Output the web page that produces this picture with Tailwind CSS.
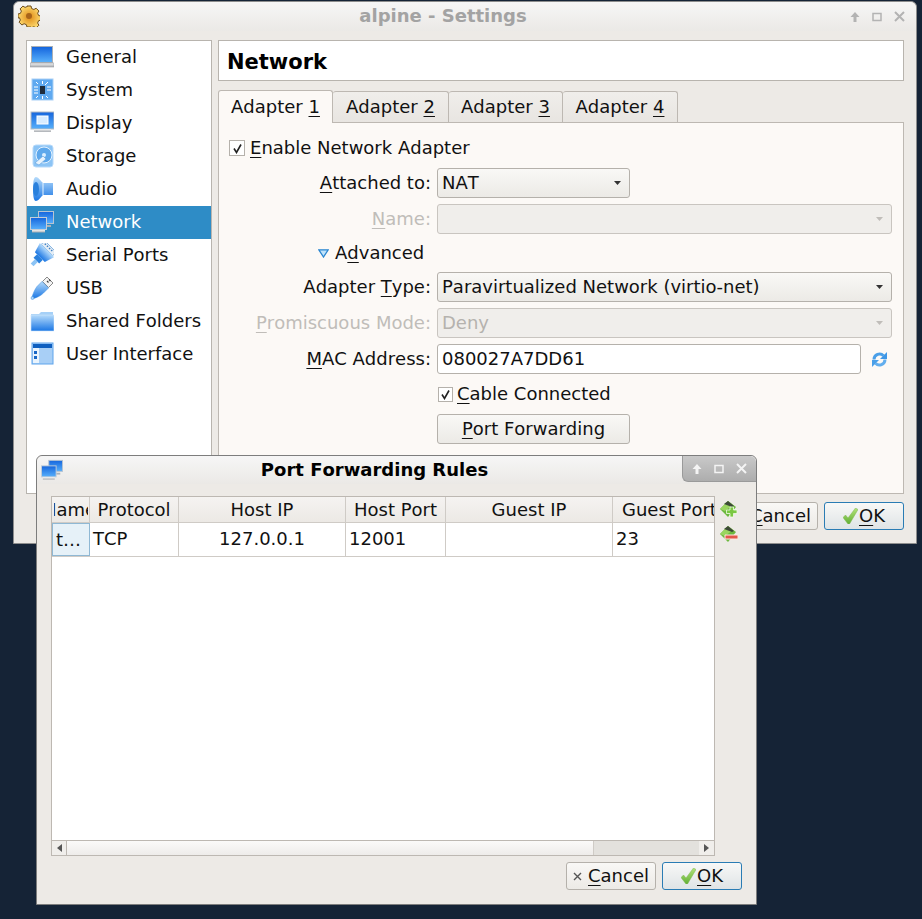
<!DOCTYPE html>
<html lang="en">
<head>
  <meta charset="UTF-8"/>
  <title>alpine - Settings</title>
  <script src="https://cdn.jsdelivr.net/npm/@tailwindcss/browser@4"></script>
</head>
<body class="relative h-[919px] w-[922px] overflow-hidden bg-[#152336] font-['DejaVu_Sans',sans-serif] text-[18px] leading-none text-[#111] [font-kerning:none]">

  <!-- shared gradients -->
  <svg class="absolute h-0 w-0">
    <defs>
      <linearGradient id="blue" x1="0" y1="0" x2="0" y2="1"><stop offset="0" stop-color="#b5dbfb"/><stop offset="1" stop-color="#1a76e4"/></linearGradient>
      <linearGradient id="screen" x1="0" y1="0" x2="0" y2="1"><stop offset="0" stop-color="#1565dd"/><stop offset="1" stop-color="#58b0fb"/></linearGradient>
      <linearGradient id="grey" x1="0" y1="0" x2="0" y2="1"><stop offset="0" stop-color="#f2f2f2"/><stop offset="1" stop-color="#a9adb2"/></linearGradient>
      <linearGradient id="green" x1="0" y1="0" x2="0" y2="1"><stop offset="0" stop-color="#b3e37a"/><stop offset="1" stop-color="#62b035"/></linearGradient>
      <radialGradient id="gear"><stop offset="0" stop-color="#e08a14"/><stop offset="1" stop-color="#fbd66c"/></radialGradient>
      <symbol id="net" viewBox="0 0 24 22">
        <rect x="8.500" y="0.500" width="15" height="12" fill="url(#screen)" stroke="#b7c4d2"/>
        <path d="M11 14h10v2H11z" fill="#aab2ba"/>
        <rect x="0.500" y="6.500" width="16" height="12" fill="url(#screen)" stroke="#c4ced8"/>
        <path d="M2 19h13v2.500H2z" fill="url(#grey)"/>
      </symbol>
      <symbol id="check" viewBox="0 0 15 16">
        <path d="M0 9.500l2.500-2.500 2.500 3L12.500 0 15 1.500 6.500 16H5z" fill="url(#green)" stroke="#7eb650" stroke-width=".5"/>
      </symbol>
    </defs>
  </svg>

  <!-- main settings window -->
  <div class="absolute left-[13px] top-[1px] flex h-[543px] w-[904px] flex-col rounded-t-[6px] border border-[#8d8d8d] bg-[#edeae6]">
    <div class="relative flex h-[29px] shrink-0 items-center justify-center rounded-t-[6px] bg-gradient-to-b from-[#f6f6f6] to-[#ebe9e6] pb-[2px] pr-[44px]">
      <svg class="absolute left-[4px] top-[3px] h-[22px] w-[22px]" viewBox="0 0 22 22">
        <path d="M9 1h4l.6 2.500 2.300 1 2.200-1.300 2.800 2.800-1.300 2.200 1 2.300 2.400.6v4l-2.400.6-1 2.300 1.300 2.200-2.800 2.800-2.200-1.300-2.300 1L13 22H9l-.6-2.300-2.300-1-2.200 1.300-2.800-2.800 1.300-2.200-1-2.300L0 13V9l2.400-.6 1-2.300L2.100 3.900 4.900 1.100l2.200 1.300 2.300-1z" fill="url(#gear)" stroke="#6d4c1a" stroke-width="1"/>
        <circle cx="11" cy="11" r="3" fill="#a8641a"/>
      </svg>
      <span class="text-[18px] font-bold text-[#a3a3a3]">alpine - Settings</span>
      <div class="absolute right-[11px] top-[9px] flex items-center gap-[12px]">
        <svg class="h-[10px] w-[10px]" viewBox="0 0 10 10"><path d="M5 0l4.500 5H6.500v5h-3V5H.5z" fill="#b3b3b3"/></svg>
        <svg class="h-[10px] w-[10px]" viewBox="0 0 10 10"><path d="M1 1.500h8v7H1z" fill="none" stroke="#b3b3b3" stroke-width="1.500"/></svg>
        <svg class="h-[11px] w-[11px]" viewBox="0 0 11 11"><path d="M1 1l9 9M10 1l-9 9" stroke="#b3b3b3" stroke-width="2"/></svg>
      </div>
    </div>

    <div class="flex flex-1 gap-[6px] px-[12px] pt-[9px]">
      <!-- sidebar -->
      <ul class="h-[454px] w-[186px] shrink-0 border border-[#b8b4ae] bg-white">
        <li class="flex h-[33px] items-center pb-[2px]">
          <svg class="ml-[3px] mr-[12px] h-[24px] w-[24px]" viewBox="0 0 24 24"><rect x="1" y="1" width="22" height="17" fill="#aab0b6"/><rect x="2" y="2" width="20" height="15" fill="url(#screen)"/><path d="M0 18h24v4H0z" fill="url(#grey)" stroke="#9aa0a6" stroke-width=".6"/></svg>
          General
        </li>
        <li class="flex h-[33px] items-center pb-[2px]">
          <svg class="ml-[3px] mr-[12px] h-[24px] w-[24px]" viewBox="0 0 24 24"><rect x="2" y="1" width="21" height="21" fill="#5fa9f0" stroke="#a9d0f5"/><rect x="10" y="8" width="5" height="8" fill="#1f2c3c"/><path d="M12.500 3v3M12.500 18v3M4 9h4M4 12h4M4 15h4M17 9h4M17 12h4M15 7l3-3M8 18l-2 2M16 18l2 2M8 6L6 4" stroke="#fff"/></svg>
          System
        </li>
        <li class="flex h-[33px] items-center pb-[2px]">
          <svg class="ml-[3px] mr-[12px] h-[24px] w-[24px]" viewBox="0 0 24 24"><rect x="1" y="1" width="23" height="17" fill="url(#screen)" stroke="#b5bcc4"/><rect x="7" y="5" width="11" height="8" fill="#d8ecff" stroke="#fff"/><path d="M4 18h17v3H4z" fill="url(#grey)"/></svg>
          Display
        </li>
        <li class="flex h-[33px] items-center pb-[2px]">
          <svg class="ml-[3px] mr-[12px] h-[24px] w-[24px]" viewBox="0 0 24 24"><rect x="3" y="1" width="20" height="22" rx="3" fill="#8cc4f5" stroke="#b8dafa"/><circle cx="14" cy="11" r="8" fill="#5ea8ec" stroke="#e4f2ff"/><circle cx="14" cy="11" r="2" fill="#dcefff"/><path d="M5 19l8-7 3 3-7 6z" fill="#e8f3fd" stroke="#5fa0dc" stroke-width=".6"/></svg>
          Storage
        </li>
        <li class="flex h-[33px] items-center pb-[2px]">
          <svg class="ml-[3px] mr-[12px] h-[24px] w-[24px]" viewBox="0 0 24 24"><path d="M6 0c2 0 4 3 7 6h10v12H13c-3 3-5 6-7 6-2.500 0-3-6-3-12S3.500 0 6 0z" fill="url(#blue)"/><ellipse cx="6" cy="12" rx="3" ry="7" fill="#2a80dc"/><path d="M13 6v12" stroke="#e6f3fe"/></svg>
          Audio
        </li>
        <li class="flex h-[33px] items-center bg-[#2e8cc6] pb-[2px] text-white">
          <svg class="ml-[3px] mr-[12px] h-[24px] w-[24px]"><use href="#net"/></svg>
          Network
        </li>
        <li class="flex h-[33px] items-center pb-[2px]">
          <svg class="ml-[3px] mr-[12px] h-[24px] w-[24px]" viewBox="0 0 24 24"><g transform="rotate(45 12 12)"><rect x="4" y="0" width="16" height="5" fill="#e4edf5" stroke="#6fa8de" stroke-width=".8"/><path d="M6 2h12" stroke="#3f7fc4" stroke-width="1.400" stroke-dasharray="1.500 1.500"/><path d="M2 5h20l-3 10H5z" fill="url(#blue)"/><path d="M8 15h8v5H8z" fill="#2a80dc"/><path d="M10 20h4v6h-4z" fill="#8cc4f5"/></g></svg>
          Serial Ports
        </li>
        <li class="flex h-[33px] items-center pb-[2px]">
          <svg class="ml-[3px] mr-[12px] h-[24px] w-[24px]" viewBox="0 0 24 24"><path d="M17 1l6 6-4.500 4.500-6-6z" fill="#f4f4f4" stroke="#8a8a8a"/><path d="M17 5l1.500 1.500M19 3.500L20.500 5" stroke="#444" stroke-width="1.200"/><path d="M12 5.500l6.500 6.500-5 5c-3 3-6.500 4.500-10 5.500L2 21c1-3.500 3-8 5-10.500z" fill="url(#blue)" stroke="#3d8fe0" stroke-width=".5"/><circle cx="2.500" cy="22" r="1.500" fill="#a9d4fa" stroke="#3d8fe0" stroke-width=".5"/></svg>
          USB
        </li>
        <li class="flex h-[33px] items-center pb-[2px]">
          <svg class="ml-[3px] mr-[12px] h-[24px] w-[24px]" viewBox="0 0 24 24"><path d="M1 5h8l2-2h12v3H1z" fill="#a5d0f7"/><path d="M1 6h23v16H1z" fill="url(#blue)" stroke="#cde4fa" stroke-width=".6"/></svg>
          Shared Folders
        </li>
        <li class="flex h-[33px] items-center pb-[2px]">
          <svg class="ml-[3px] mr-[12px] h-[24px] w-[24px]" viewBox="0 0 24 24"><rect x="2" y="1" width="21" height="21" fill="#a8cff6" stroke="#5ea4ec"/><path d="M3 2h19v4H3z" fill="#0e5fc0"/><path d="M3 6h6v15H3z" fill="#eaf4fd"/><path d="M4 9h3v3H4zM4 14h3v3H4z" fill="#1766c6"/></svg>
          User Interface
        </li>
      </ul>

      <!-- settings page -->
      <div class="flex h-[454px] flex-1 flex-col">
        <div class="flex h-[41px] shrink-0 items-center border border-[#b8b4ae] bg-white pl-[8px] pt-[3px] text-[21px] font-bold text-black">Network</div>
        <div class="mt-[8px] flex h-[33px] shrink-0 items-end">
          <div class="z-10 -mb-px flex h-[33px] w-[115px] items-center justify-center rounded-t-[3px] border border-b-0 border-[#bdb8b2] bg-[#fcf9f6]">Adapter&nbsp;<span class="underline underline-offset-[3px]">1</span></div>
          <div class="flex h-[31px] w-[116px] items-center justify-center rounded-t-[3px] border border-b-0 border-l-0 border-[#bdb8b2] bg-gradient-to-b from-[#f0eeeb] to-[#e8e5e1]">Adapter&nbsp;<span class="underline underline-offset-[3px]">2</span></div>
          <div class="flex h-[31px] w-[114px] items-center justify-center rounded-t-[3px] border border-b-0 border-l-0 border-[#bdb8b2] bg-gradient-to-b from-[#f0eeeb] to-[#e8e5e1]">Adapter&nbsp;<span class="underline underline-offset-[3px]">3</span></div>
          <div class="flex h-[31px] w-[115px] items-center justify-center rounded-t-[3px] border border-b-0 border-l-0 border-[#bdb8b2] bg-gradient-to-b from-[#f0eeeb] to-[#e8e5e1]">Adapter&nbsp;<span class="underline underline-offset-[3px]">4</span></div>
        </div>
        <div class="flex-1 border border-[#bdb8b2] bg-[#fcf9f6] pt-[15px]">
          <label class="flex h-[20px] items-center pl-[10px]">
            <span class="mr-[5px] flex h-[16px] w-[16px] items-center justify-center border border-[#b5b1ab] bg-white">
              <svg class="h-[11px] w-[11px]" viewBox="0 0 11 11"><path d="M2 5.500l2.500 4L9 1.500" fill="none" stroke="#222" stroke-width="1.600"/></svg>
            </span>
            <span><span class="underline underline-offset-[3px]">E</span>nable Network Adapter</span>
          </label>

          <div class="mt-[10px] grid grid-cols-[212px_1fr] items-center gap-x-[6px] pr-[11px]">
            <div class="h-[30px] text-right leading-[30px]"><span class="underline underline-offset-[3px]">A</span>ttached to:</div>
            <div class="flex h-[30px] w-[193px] items-center justify-between rounded-[3px] border border-[#b5b1ab] bg-gradient-to-b from-[#f9f8f6] to-[#eceae6] pl-[4px] pr-[8px]">NAT<svg class="h-[4px] w-[7px]" viewBox="0 0 7 4"><path d="M0 0h7L3.500 4z" fill="#333"/></svg></div>

            <div class="mt-[6px] h-[30px] text-right leading-[30px] text-[#c0bdb9]"><span class="underline underline-offset-[3px]">N</span>ame:</div>
            <div class="mt-[6px] flex h-[30px] items-center justify-end rounded-[3px] border border-[#c9c5c0] bg-[#f0eeeb] pr-[8px]"><svg class="h-[4px] w-[7px]" viewBox="0 0 7 4"><path d="M0 0h7L3.500 4z" fill="#c0bdb9"/></svg></div>

            <div class="col-span-2 mt-[4px] flex h-[30px] items-center pl-[99px]">
              <svg class="mr-[6px] h-[9px] w-[11px]" viewBox="0 0 11 9"><path d="M.8.8h9.400L5.500 8z" fill="#bfe3fb" stroke="#2a86d0" stroke-width="1.300"/></svg>
              <span>A<span class="underline underline-offset-[3px]">d</span>vanced</span>
            </div>

            <div class="mt-[4px] h-[30px] text-right leading-[30px]">Adapter <span class="underline underline-offset-[3px]">T</span>ype:</div>
            <div class="mt-[4px] flex h-[30px] items-center justify-between rounded-[3px] border border-[#b5b1ab] bg-gradient-to-b from-[#f9f8f6] to-[#eceae6] pl-[4px] pr-[8px]">Paravirtualized Network (virtio-net)<svg class="h-[4px] w-[7px]" viewBox="0 0 7 4"><path d="M0 0h7L3.500 4z" fill="#333"/></svg></div>

            <div class="mt-[6px] h-[30px] text-right leading-[30px] text-[#c0bdb9]"><span class="underline underline-offset-[3px]">P</span>romiscuous Mode:</div>
            <div class="mt-[6px] flex h-[30px] items-center justify-between rounded-[3px] border border-[#c9c5c0] bg-[#f0eeeb] pl-[4px] pr-[8px] text-[#b5b2ae]">Deny<svg class="h-[4px] w-[7px]" viewBox="0 0 7 4"><path d="M0 0h7L3.500 4z" fill="#c0bdb9"/></svg></div>

            <div class="mt-[6px] h-[30px] text-right leading-[30px]"><span class="underline underline-offset-[3px]">M</span>AC Address:</div>
            <div class="mt-[6px] flex h-[30px] items-center">
              <div class="flex h-[30px] w-[424px] items-center rounded-[3px] border border-[#b5b1ab] bg-white pl-[4px]">080027A7DD61</div>
              <svg class="ml-[10px] h-[17px] w-[17px]" viewBox="0 0 17 17"><path d="M3 8.500a5.500 5.500 0 0 1 9.500-3.700" fill="none" stroke="#4a9fe8" stroke-width="3"/><path d="M16 1v7H9z" fill="#3f97e6"/><path d="M14 8.500a5.500 5.500 0 0 1-9.500 3.700" fill="none" stroke="#62aeee" stroke-width="3"/><path d="M1 16V9h7z" fill="#4a9fe8"/></svg>
            </div>

            <div></div>
            <label class="mt-[10px] flex h-[20px] items-center">
              <span class="ml-[1px] mr-[4px] flex h-[15px] w-[15px] items-center justify-center border border-[#b5b1ab] bg-white">
                <svg class="h-[11px] w-[11px]" viewBox="0 0 11 11"><path d="M2 5.500l2.500 4L9 1.500" fill="none" stroke="#222" stroke-width="1.600"/></svg>
              </span>
              <span><span class="underline underline-offset-[3px]">C</span>able Connected</span>
            </label>

            <div></div>
            <div class="mt-[10px] flex h-[30px] w-[193px] items-center justify-center rounded-[3px] border border-[#b5b1ab] bg-gradient-to-b from-[#f9f8f6] to-[#eceae6]"><span><span class="underline underline-offset-[3px]">P</span>ort Forwarding</span></div>
          </div>
        </div>
      </div>
    </div>

    <div class="flex justify-end gap-[6px] px-[12px] pb-[13px]">
      <div class="flex h-[28px] w-[90px] items-center justify-center rounded-[3px] border border-[#b5b1ab] bg-gradient-to-b from-[#f9f8f6] to-[#eceae6]">
        <svg class="mr-[6px] h-[9px] w-[9px]" viewBox="0 0 9 9"><path d="M1 1l7 7M8 1L1 8" stroke="#555" stroke-width="1.400"/></svg><span class="underline underline-offset-[3px]">C</span>ancel
      </div>
      <div class="flex h-[28px] w-[80px] items-center justify-center rounded-[3px] border border-[#2a7cb4] bg-gradient-to-b from-[#f8f8f7] to-[#dfe4e6]">
        <svg class="mr-[1px] h-[16px] w-[15px]"><use href="#check"/></svg><span class="underline underline-offset-[3px]">O</span>K
      </div>
    </div>
  </div>

  <!-- port forwarding dialog -->
  <div class="absolute left-[36px] top-[455px] flex h-[450px] w-[721px] flex-col rounded-t-[6px] border border-[#7d7d7d] bg-[#edeae6]">
    <div class="relative flex h-[28px] shrink-0 items-center justify-center rounded-t-[6px] bg-gradient-to-b from-[#f6f6f6] to-[#ebe9e6] pr-[44px]">
      <svg class="absolute left-[4px] top-[3px] h-[22px] w-[22px]"><use href="#net"/></svg>
      <span class="text-[18px] font-bold text-black">Port Forwarding Rules</span>
      <div class="absolute right-0 top-0 flex h-[26px] w-[74px] items-center gap-[12px] rounded-bl-[6px] rounded-tr-[6px] border-b border-l border-[#9a9a9a] bg-gradient-to-b from-[#c9c9c9] to-[#adadad] pl-[9px]">
        <svg class="h-[10px] w-[10px]" viewBox="0 0 10 10"><path d="M5 0l4.500 5H6.500v5h-3V5H.5z" fill="#f4f4f4"/></svg>
        <svg class="h-[10px] w-[10px]" viewBox="0 0 10 10"><path d="M1 1.500h8v7H1z" fill="none" stroke="#f4f4f4" stroke-width="1.500"/></svg>
        <svg class="h-[11px] w-[11px]" viewBox="0 0 11 11"><path d="M1 1l9 9M10 1l-9 9" stroke="#f4f4f4" stroke-width="2"/></svg>
      </div>
    </div>

    <div class="flex flex-1 pl-[14px] pt-[12px]">
      <div class="flex h-[360px] w-[664px] flex-col border border-[#bdb8b2] bg-white">
        <!-- table head -->
        <div class="flex h-[26px] shrink-0 border-b border-[#cfcbc6] bg-gradient-to-b from-[#f5f3f1] to-[#ece9e5]">
          <div class="w-[38px] shrink-0 border-r border-[#cfcbc6] pl-[2px] pr-px leading-[26px]">
            <div class="overflow-hidden whitespace-nowrap"><span class="ml-[-11px]">Name</span></div>
          </div>
          <div class="w-[89px] shrink-0 border-r border-[#cfcbc6] text-center leading-[26px]">Protocol</div>
          <div class="w-[167px] shrink-0 border-r border-[#cfcbc6] text-center leading-[26px]">Host IP</div>
          <div class="w-[100px] shrink-0 border-r border-[#cfcbc6] text-center leading-[26px]">Host Port</div>
          <div class="w-[167px] shrink-0 border-r border-[#cfcbc6] text-center leading-[26px]">Guest IP</div>
          <div class="min-w-0 flex-1 overflow-hidden pl-[9px] whitespace-nowrap leading-[26px]">Guest Port</div>
        </div>
        <!-- table row -->
        <div class="flex h-[34px] shrink-0 border-b border-[#cfcbc6]">
          <div class="w-[38px] shrink-0 border border-[#8fb8d4] bg-[#e6f1f8] pl-[3px] leading-[32px]">t…</div>
          <div class="w-[89px] shrink-0 border-r border-[#cfcbc6] pl-[3px] leading-[32px]">TCP</div>
          <div class="w-[167px] shrink-0 border-r border-[#cfcbc6] text-center leading-[32px]">127.0.0.1</div>
          <div class="w-[100px] shrink-0 border-r border-[#cfcbc6] pl-[3px] leading-[32px]">12001</div>
          <div class="w-[167px] shrink-0 border-r border-[#cfcbc6]"></div>
          <div class="flex-1 pl-[3px] leading-[32px]">23</div>
        </div>
        <div class="flex-1"></div>
        <!-- horizontal scrollbar -->
        <div class="flex h-[15px] shrink-0 border-t border-[#bdb8b2]">
          <div class="flex w-[15px] items-center justify-center border-r border-[#bdb8b2] bg-[#f0eeeb]"><svg class="h-[8px] w-[5px]" viewBox="0 0 5 8"><path d="M5 0v8L0 4z" fill="#555"/></svg></div>
          <div class="w-[526px] bg-gradient-to-b from-[#fbfaf9] to-[#eeecea]"></div>
          <div class="flex-1 border-l border-[#cfcbc6] bg-[#e3e1dd]"></div>
          <div class="flex w-[15px] items-center justify-center bg-[#f0eeeb]"><svg class="h-[8px] w-[5px]" viewBox="0 0 5 8"><path d="M0 0v8l5-4z" fill="#555"/></svg></div>
        </div>
      </div>

      <!-- row actions -->
      <div class="ml-[5px] flex flex-col gap-[7px] pt-[4px]">
        <svg class="h-[18px] w-[18px]" viewBox="0 0 18 18"><path d="M0 9l8-8 8 6-8 10z" fill="#6cb83e"/><path d="M0 9l8-8 5 4-8 6z" fill="#9ad45f"/><path d="M4 4l4-3 6 5-2 1z" fill="#3c4a36"/><path d="M10 7h3.500v3H17v3.500h-3.500V17H10v-3.500H6.500V10H10z" fill="#7bc843" stroke="#f2fbe8" stroke-width=".8"/></svg>
        <svg class="h-[18px] w-[18px]" viewBox="0 0 18 18"><path d="M0 9l8-8 8 6-8 10z" fill="#6cb83e"/><path d="M0 9l8-8 5 4-8 6z" fill="#9ad45f"/><path d="M4 4l4-3 6 5-2 1z" fill="#3c4a36"/><path d="M5 10h13v4H5z" fill="#e2574c" stroke="#ffe9e0"/></svg>
      </div>
    </div>

    <div class="flex justify-end gap-[6px] pb-[14px] pr-[14px]">
      <div class="flex h-[28px] w-[90px] items-center justify-center rounded-[3px] border border-[#b5b1ab] bg-gradient-to-b from-[#f9f8f6] to-[#eceae6]">
        <svg class="mr-[6px] h-[9px] w-[9px]" viewBox="0 0 9 9"><path d="M1 1l7 7M8 1L1 8" stroke="#555" stroke-width="1.400"/></svg><span class="underline underline-offset-[3px]">C</span>ancel
      </div>
      <div class="flex h-[28px] w-[80px] items-center justify-center rounded-[3px] border border-[#2a7cb4] bg-gradient-to-b from-[#f8f8f7] to-[#dfe4e6]">
        <svg class="mr-[1px] h-[16px] w-[15px]"><use href="#check"/></svg><span class="underline underline-offset-[3px]">O</span>K
      </div>
    </div>
  </div>
</body>
</html>
